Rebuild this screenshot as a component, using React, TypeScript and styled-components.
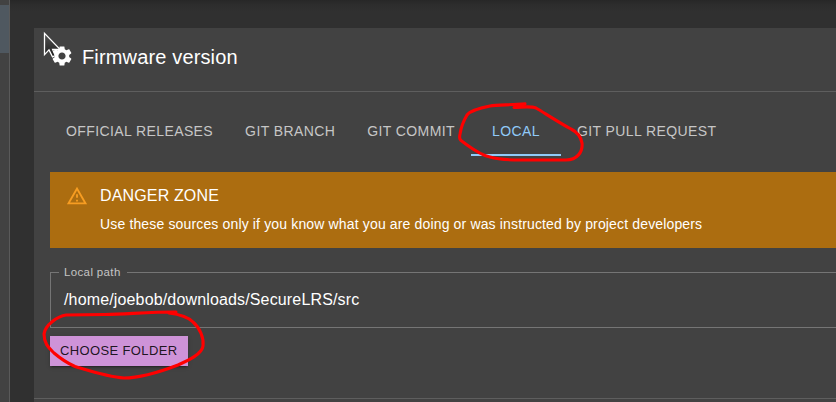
import React from "react";
import styled, { createGlobalStyle } from "styled-components";

const GlobalStyle = createGlobalStyle`
  * { box-sizing: border-box; }
  html, body { margin: 0; background: #303030; overflow: hidden; }
  body { font-family: "Liberation Sans", Arial, sans-serif; color: #fff; }
`;

const Page = styled.div`
  position: relative;
  display: flex;
  width: 836px;
  height: 402px;
  overflow: hidden;
`;

const Sidebar = styled.nav`
  flex: 0 0 10px;
  background: #424242;
  border-right: 1px solid #5a5a5a;
  padding-top: 5px;
`;

const ActiveItem = styled.div`
  height: 48px;
  background: #4f5860;
`;

const Main = styled.main`
  flex: 1;
  min-width: 0;
  padding: 28px 0 0 24px;
  background: linear-gradient(#272727 0, #2d2d2d 5px, #303030 12px);
`;

const Card = styled.section`
  height: 374px;
  background: #424242;
`;

const CardHeader = styled.header`
  display: flex;
  align-items: flex-start;
  gap: 8px;
  height: 64px;
  padding: 16px 16px 0;
  border-bottom: 1px solid #5e5e5e;
`;

const Title = styled.h1`
  margin: 0;
  font-size: 20px;
  font-weight: 400;
  line-height: 26px;
  letter-spacing: 0.15px;
`;

const CardBody = styled.div`
  height: 307px;
  padding: 16px 0 0 16px;
  border-bottom: 1px solid #5e5e5e;
`;

const Tabs = styled.div`
  display: flex;
  height: 48px;
`;

const Tab = styled.button<{ $active?: boolean }>`
  flex: none;
  min-width: 90px;
  padding: 0 16px 2px;
  border: 0;
  background: none;
  font: 400 14px/18px "Liberation Sans", Arial, sans-serif;
  letter-spacing: 0.4px;
  white-space: nowrap;
  color: ${(p) => (p.$active ? "#90caf9" : "#c6c6c6")};
  box-shadow: ${(p) => (p.$active ? "inset 0 -2px #90caf9" : "none")};
`;

const Alert = styled.div`
  display: flex;
  gap: 12px;
  height: 76px;
  margin-top: 16px;
  padding: 13px 16px 0;
  background: #ac6d10;
`;

const AlertTitle = styled.div`
  margin-top: -1px;
  font-size: 16px;
  line-height: 24px;
  letter-spacing: 0.15px;
`;

const AlertText = styled.div`
  margin-top: 6px;
  font-size: 14px;
  line-height: 20px;
  letter-spacing: 0.15px;
`;

const Field = styled.fieldset`
  height: 62px;
  min-width: 0;
  margin: 18px -4px 0 0;
  padding: 0 0 0 8px;
  border: 1px solid #757575;
`;

const Legend = styled.legend`
  height: 12px;
  padding: 0 6px 0 5px;
  font-size: 11.5px;
  line-height: 12px;
  letter-spacing: 0.36px;
  color: #c4c4c4;
`;

const Path = styled.div`
  padding: 10px 5px 8px;
  font-size: 16px;
  line-height: 23px;
  letter-spacing: 0.15px;
`;

const ChooseButton = styled.button`
  display: block;
  width: 138px;
  height: 30px;
  margin-top: 8px;
  padding: 0 10px;
  border: 0;
  background: #ce93d8;
  color: rgba(0, 0, 0, 0.87);
  font: 400 13px/22px "Liberation Sans", Arial, sans-serif;
  letter-spacing: 0.37px;
  text-align: left;
  white-space: nowrap;
  box-shadow: 0 3px 1px -2px rgba(0, 0, 0, 0.2), 0 2px 2px rgba(0, 0, 0, 0.14), 0 1px 5px rgba(0, 0, 0, 0.12);
`;

const Overlay = styled.svg`
  position: absolute;
  inset: 0;
  pointer-events: none;
`;

const TABS = ["OFFICIAL RELEASES", "GIT BRANCH", "GIT COMMIT", "LOCAL", "GIT PULL REQUEST"];

const GearIcon = () => (
  <svg width="24" height="24" viewBox="0 0 24 24" fill="#fff">
    <path d="M19.14 12.94c.04-.3.06-.61.06-.94 0-.32-.02-.64-.07-.94l2.03-1.58c.18-.14.23-.41.12-.61l-1.92-3.32c-.12-.22-.37-.29-.59-.22l-2.39.96c-.5-.38-1.03-.7-1.62-.94l-.36-2.54c-.04-.24-.24-.41-.48-.41h-3.84c-.24 0-.43.17-.47.41l-.36 2.54c-.59.24-1.13.57-1.62.94l-2.39-.96c-.22-.08-.47 0-.59.22L2.74 8.87c-.12.21-.08.47.12.61l2.03 1.58c-.05.3-.09.63-.09.94s.02.64.07.94l-2.03 1.58c-.18.14-.23.41-.12.61l1.92 3.32c.12.22.37.29.59.22l2.39-.96c.5.38 1.03.7 1.62.94l.36 2.54c.05.24.24.41.48.41h3.84c.24 0 .44-.17.47-.41l.36-2.54c.59-.24 1.13-.56 1.62-.94l2.39.96c.22.08.47 0 .59-.22l1.92-3.32c.12-.22.07-.47-.12-.61l-2.01-1.58zM12 15.6c-1.98 0-3.6-1.62-3.6-3.6s1.62-3.6 3.6-3.6 3.6 1.62 3.6 3.6-1.62 3.6-3.6 3.6z" />
  </svg>
);

const WarningIcon = () => (
  <svg width="22" height="22" viewBox="0 0 24 24" fill="#f79d22">
    <path d="M12 5.99L19.53 19H4.47L12 5.99M12 2L1 21h22L12 2zm1 14h-2v2h2v-2zm0-6h-2v4h2v-4z" />
  </svg>
);

export default function App() {
  return (
    <Page>
      <GlobalStyle />
      <Sidebar>
        <ActiveItem />
      </Sidebar>
      <Main>
        <Card>
          <CardHeader>
            <GearIcon />
            <Title>Firmware version</Title>
          </CardHeader>
          <CardBody>
            <Tabs>
              {TABS.map((label) => (
                <Tab key={label} $active={label === "LOCAL"}>
                  {label}
                </Tab>
              ))}
            </Tabs>
            <Alert>
              <WarningIcon />
              <div>
                <AlertTitle>DANGER ZONE</AlertTitle>
                <AlertText>
                  Use these sources only if you know what you are doing or was instructed by project developers
                </AlertText>
              </div>
            </Alert>
            <Field>
              <Legend>Local path</Legend>
              <Path>/home/joebob/downloads/SecureLRS/src</Path>
            </Field>
            <ChooseButton>CHOOSE FOLDER</ChooseButton>
          </CardBody>
        </Card>
      </Main>
      <Overlay width="836" height="402" viewBox="0 0 836 402" fill="none">
        <defs>
          <linearGradient id="pointer" x1="0" y1="0" x2="0" y2="1">
            <stop offset="0" stopColor="#555" />
            <stop offset="1" stopColor="#1c1c1c" />
          </linearGradient>
        </defs>
        <path d="M44.5 33.300V54.600L49 49.900L52.500 56.800L55.200 55.600L52.600 49.400H60Z" fill="url(#pointer)" stroke="#fff" strokeWidth="1.3" />
        <g stroke="#f00" strokeWidth="3.1" strokeLinecap="round" strokeLinejoin="round">
          <path d="M525 103.800C510 105 497 105 490 106C480 108 470 111 467 115C464 120 461 128 460 134C459 139 460 140 463 142C470 147 480 155 490 157C500 160 508 160 520 160L566 160C577 160 583 152 582 143C581 137 577 132 571 129C558 122 543 112 536 108C531 106 525 107 514 107.500" />
          <path d="M176 312C150 312 128 314 105 314.500L66 315C58 316 45 325 44 334C44 344 49 348 54 353C61 359 67 363 75 366.500C87 370 108 377 124 378C141 378 165 370 178 365C189 360 202 354 203 346C204 338 200 328 193 322C188 317 177 314 169 313" />
        </g>
      </Overlay>
    </Page>
  );
}
